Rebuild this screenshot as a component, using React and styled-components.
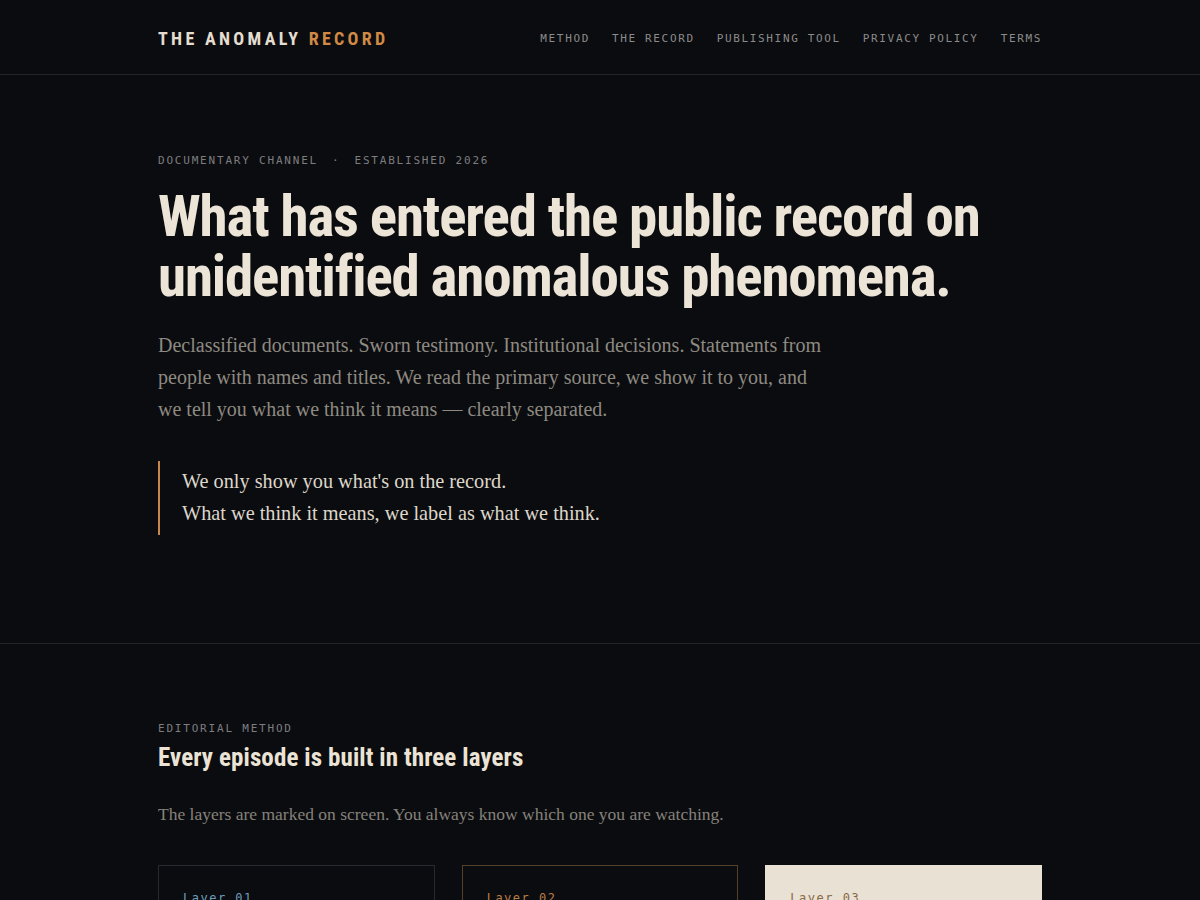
import React from "react";
import styled, { createGlobalStyle } from "styled-components";

const Global = createGlobalStyle`
  html, body { margin: 0; padding: 0; background: #0b0c0f; }
  body { font-family: "Liberation Serif", serif; color: #e9e2d4; }
  * { box-sizing: border-box; }
`;

const mono = `"DejaVu Sans Mono", "Liberation Mono", monospace`;
const cond = `"Liberation Sans Narrow", "Roboto Condensed", "Roboto", sans-serif`;
const serif = `"Liberation Serif", "DejaVu Serif", serif`;

const Page = styled.div`
  min-height: 900px;
  background: #0b0c0f;
`;

const Header = styled.header`
  height: 75px;
  border-bottom: 1px solid #23252a;
`;

const Container = styled.div`
  width: 884px;
  margin: 0 auto;
`;

const HeaderInner = styled(Container)`
  height: 100%;
  display: flex;
  align-items: center;
  justify-content: space-between;
  padding-top: 2px;
`;

const Logo = styled.div`
  font-family: ${cond};
  font-weight: 700;
  font-size: 18px;
  letter-spacing: 3.3px;
  color: #e4ddd0;
  span { color: #d08a45; }
`;

const Nav = styled.nav`
  display: flex;
  gap: 22px;
`;

const NavLink = styled.a`
  font-family: ${mono};
  font-size: 11px;
  letter-spacing: 1.65px;
  color: #8b8b8b;
  text-transform: uppercase;
  text-decoration: none;
`;

const Hero = styled.section`
  padding: 79px 0 108px;
  border-bottom: 1px solid #23252a;
`;

const Eyebrow = styled.div`
  font-family: ${mono};
  font-size: 11px;
  letter-spacing: 1.8px;
  color: #7d7d80;
  text-transform: uppercase;
  line-height: 14px;
  span { margin: 0 14px; }
`;

const Headline = styled.h1`
  margin: 19px 0 0;
  font-family: ${cond};
  font-weight: 700;
  font-size: 57px;
  line-height: 60px;
  color: #ece5d7;
  letter-spacing: -1.15px;
`;

const Lead = styled.p`
  margin: 22px 0 0;
  max-width: 665px;
  font-family: ${serif};
  font-size: 20px;
  line-height: 32px;
  color: #8e8a82;
`;

const Quote = styled.blockquote`
  margin: 36px 0 0;
  padding: 4px 0 6px 22px;
  border-left: 2px solid #c7864a;
  font-family: ${serif};
  font-size: 20.3px;
  line-height: 32px;
  color: #ddd6ca;
`;

const Method = styled.section`
  padding-top: 78px;
`;

const SectionTitle = styled.h2`
  margin: 6px 0 0;
  font-family: ${cond};
  font-weight: 700;
  font-size: 25px;
  line-height: 32px;
  letter-spacing: 0.1px;
  color: #ebe4d6;
`;

const SectionText = styled.p`
  margin: 26px 0 0;
  font-family: ${serif};
  font-size: 17.5px;
  line-height: 28px;
  color: #85827b;
`;

const Cards = styled.div`
  margin-top: 37px;
  display: grid;
  grid-template-columns: repeat(3, 1fr);
  gap: 27px;
`;

const Card = styled.div`
  height: 200px;
  padding: 25px 24px;
  border: 1px solid ${(p) => p.$border};
  background: ${(p) => p.$bg};
`;

const CardLabel = styled.div`
  font-family: ${mono};
  font-size: 12px;
  letter-spacing: 1.5px;
  color: ${(p) => p.$color};
`;

const navItems = ["Method", "The Record", "Publishing Tool", "Privacy Policy", "Terms"];

const cards = [
  { label: "Layer 01", border: "#252a31", bg: "transparent", color: "#6d9cbc" },
  { label: "Layer 02", border: "#55402b", bg: "transparent", color: "#b97d43" },
  { label: "Layer 03", border: "#e8e1d4", bg: "#e8e1d4", color: "#8a6a44" },
];

export default function App() {
  return (
    <Page>
      <Global />
      <Header>
        <HeaderInner>
          <Logo>
            THE ANOMALY <span>RECORD</span>
          </Logo>
          <Nav>
            {navItems.map((n) => (
              <NavLink key={n} href="#">
                {n}
              </NavLink>
            ))}
          </Nav>
        </HeaderInner>
      </Header>
      <Hero>
        <Container>
          <Eyebrow>
            Documentary Channel<span>·</span>Established 2026
          </Eyebrow>
          <Headline>
            What has entered the public record on
            <br />
            unidentified anomalous phenomena.
          </Headline>
          <Lead>
            Declassified documents. Sworn testimony. Institutional decisions. Statements from
            people with names and titles. We read the primary source, we show it to you, and
            we tell you what we think it means — clearly separated.
          </Lead>
          <Quote>
            We only show you what's on the record.
            <br />
            What we think it means, we label as what we think.
          </Quote>
        </Container>
      </Hero>
      <Method>
        <Container>
          <Eyebrow>Editorial Method</Eyebrow>
          <SectionTitle>Every episode is built in three layers</SectionTitle>
          <SectionText>
            The layers are marked on screen. You always know which one you are watching.
          </SectionText>
          <Cards>
            {cards.map((c) => (
              <Card key={c.label} $border={c.border} $bg={c.bg}>
                <CardLabel $color={c.color}>{c.label}</CardLabel>
              </Card>
            ))}
          </Cards>
        </Container>
      </Method>
    </Page>
  );
}
